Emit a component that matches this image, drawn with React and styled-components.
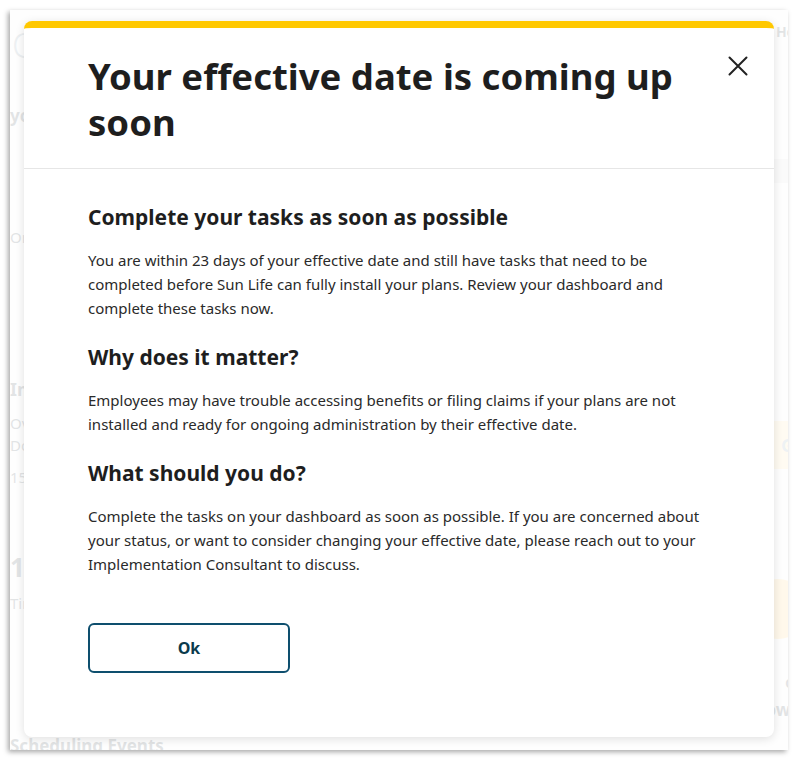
import React from 'react';
import styled, { createGlobalStyle } from 'styled-components';

const GlobalStyle = createGlobalStyle`
  html, body {
    margin: 0;
    padding: 0;
    background: #fff;
  }
  body {
    font-family: "Noto Sans", "Open Sans", sans-serif;
  }
`;

const Frame = styled.div`
  position: relative;
  margin: 10px;
  width: 778px;
  height: 740px;
  overflow: hidden;
  background: #f4f4f4;
  box-shadow: -2px 2px 5px rgba(0, 0, 0, 0.35);
`;

/* faded dashboard behind the modal */
const Page = styled.div`
  display: flex;
  justify-content: space-between;
  height: 100%;
  color: #33414a;
`;

const Column = styled.div`
  display: flex;
  flex-direction: column;
  flex-shrink: 0;
  width: ${(p) => p.$width}px;
  margin-right: ${(p) => p.$overhang || 0}px;
  padding-top: 12px;
`;

const Logo = styled.div`
  font-size: 34px;
  font-weight: 300;
  color: #7d95a3;
  height: 48px;
  padding-left: 2px;
`;

const PageText = styled.div`
  font-size: ${(p) => p.$size || 15}px;
  font-weight: ${(p) => (p.$bold ? 700 : 400)};
  margin-top: ${(p) => p.$top || 0}px;
  white-space: nowrap;
  text-align: ${(p) => p.$align || 'left'};
`;

const Banner = styled.div`
  height: 24px;
  margin-top: ${(p) => p.$top || 0}px;
  background: ${(p) => p.$color || '#ffd488'};
`;

const Rule = styled.div`
  height: 1px;
  margin-top: ${(p) => p.$top || 0}px;
  background: #c8c8c8;
`;

const Block = styled.div`
  height: 48px;
  margin-top: ${(p) => p.$top || 0}px;
  background: #ffe2a0;
  color: #8aa0ad;
  font-weight: 700;
  font-size: 18px;
  display: flex;
  align-items: center;
  justify-content: flex-end;
  padding-right: 14px;
`;

const Ring = styled.div`
  width: 60px;
  height: 60px;
  border-radius: 50%;
  margin: ${(p) => p.$top || 0}px 0 0 auto;
  background: #ffcf70;
`;

/* modal */
const Backdrop = styled.div`
  position: absolute;
  inset: 0;
  background: rgba(255, 255, 255, 0.86);
  padding: 11px 14px 0;
`;

const Dialog = styled.div`
  width: 750px;
  height: 716px;
  box-sizing: border-box;
  background: #fff;
  border-top: 7px solid #ffc800;
  border-radius: 8px;
  box-shadow: 0 2px 10px rgba(0, 0, 0, 0.12);
  display: flex;
  flex-direction: column;
`;

const Header = styled.div`
  display: flex;
  justify-content: space-between;
  align-items: flex-start;
  padding: 25px 26px 23px 64px;
  border-bottom: 1px solid #e6e6e6;
`;

const Title = styled.h1`
  margin: 0;
  max-width: 610px;
  font-size: 36.5px;
  line-height: 46px;
  font-weight: 700;
  color: #1e1e1e;
`;

const CloseButton = styled.button`
  margin-top: 3px;
  width: 20px;
  height: 20px;
  padding: 0;
  border: none;
  background: none;
  color: #222;
  cursor: pointer;
  display: flex;
  align-items: center;
  justify-content: center;
`;

const Body = styled.div`
  padding: 34px 64px 0;
`;

const SectionTitle = styled.h3`
  margin: 0 0 17px;
  font-size: 21px;
  line-height: 28px;
  font-weight: 700;
  color: #1e1e1e;
`;

const Paragraph = styled.p`
  margin: 0 0 23px;
  font-size: 15px;
  line-height: 24px;
  color: #2a2a2a;
`;

const Actions = styled.div`
  margin-top: 47px;
`;

const OkButton = styled.button`
  width: 202px;
  height: 50px;
  border: 2px solid #0e4f6e;
  border-radius: 6px;
  background: #fff;
  color: #0b3a4c;
  font-family: inherit;
  font-size: 16px;
  font-weight: 700;
  cursor: pointer;
`;

const SECTIONS = [
  {
    title: 'Complete your tasks as soon as possible',
    text: 'You are within 23 days of your effective date and still have tasks that need to be completed before Sun Life can fully install your plans. Review your dashboard and complete these tasks now.',
  },
  {
    title: 'Why does it matter?',
    text: 'Employees may have trouble accessing benefits or filing claims if your plans are not installed and ready for ongoing administration by their effective date.',
  },
  {
    title: 'What should you do?',
    text: 'Complete the tasks on your dashboard as soon as possible. If you are concerned about your status, or want to consider changing your effective date, please reach out to your Implementation Consultant to discuss.',
  },
];

const App = () => (
  <>
    <GlobalStyle />
    <Frame>
      <Page>
        <Column $width={420}>
          <Logo>O</Logo>
          <PageText $bold $size={17} $top={36}>your dashboard</PageText>
          <Banner $top={26} />
          <PageText $top={74}>Onboarding tasks</PageText>
          <Rule $top={120} />
          <PageText $bold $size={18} $top={10}>Implementation</PageText>
          <PageText $top={12}>Overview</PageText>
          <PageText $top={2}>Done</PageText>
          <PageText $top={12}>15 tasks</PageText>
          <Rule $top={24} />
          <PageText $bold $size={26} $top={38}>1) Setup</PageText>
          <PageText $top={8}>Timeline</PageText>
          <PageText $bold $size={17} $top={121}>Scheduling Events</PageText>
        </Column>
        <Column $width={320} $overhang={-20}>
          <PageText $bold $size={14} $align="right">Help</PageText>
          <Banner $top={118} $color="#d8d8d8" />
          <PageText $bold $size={16} $top={18} $align="right">i</PageText>
          <Block $top={198}>G</Block>
          <Ring $top={110} />
          <PageText $bold $size={12} $top={36} $align="right">OFF</PageText>
          <PageText $bold $size={17} $top={6} $align="right">Lower</PageText>
        </Column>
      </Page>

      <Backdrop>
        <Dialog role="dialog" aria-modal="true">
          <Header>
            <Title>Your effective date is coming up soon</Title>
            <CloseButton aria-label="Close">
              <svg width="20" height="20" viewBox="0 0 20 20" fill="none">
                <path d="M1.5 1.5L18.5 18.5M18.5 1.5L1.5 18.5" stroke="currentColor" strokeWidth="2" strokeLinecap="round" />
              </svg>
            </CloseButton>
          </Header>
          <Body>
            {SECTIONS.map((s) => (
              <section key={s.title}>
                <SectionTitle>{s.title}</SectionTitle>
                <Paragraph>{s.text}</Paragraph>
              </section>
            ))}
            <Actions>
              <OkButton>Ok</OkButton>
            </Actions>
          </Body>
        </Dialog>
      </Backdrop>
    </Frame>
  </>
);

export default App;
